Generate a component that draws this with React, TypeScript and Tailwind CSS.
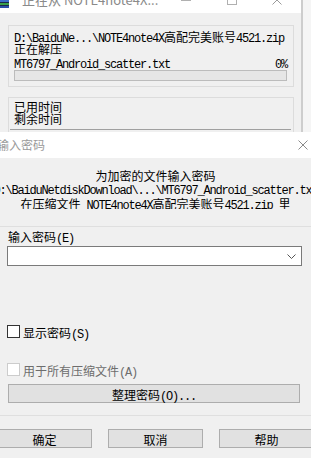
import React from "react";

const CJK_SPLIT = /([\u2E80-\u9FFF\uFF00-\uFFEF]+)/;
const CJK_TEST = /[\u2E80-\u9FFF\uFF00-\uFFEF]/;

// Chinese in a CJK face at 12px, latin runs as 6px-wide monospace like the system font
function Mixed({ text }: { text: string }) {
  return (
    <>
      {text.split(CJK_SPLIT).map((part, i) =>
        part === "" ? null : CJK_TEST.test(part) ? (
          <span key={i} className="font-['Noto_Sans_CJK_SC',sans-serif] text-[12px]">
            {part}
          </span>
        ) : (
          <span key={i} className="font-['Liberation_Mono',monospace] text-[12px] tracking-[-1.2px]">
            {part}
          </span>
        )
      )}
    </>
  );
}

function Line({ text, className = "" }: { text: string; className?: string }) {
  return (
    <div className={`h-[12px] leading-[12px] whitespace-nowrap ${className}`}>
      <Mixed text={text} />
    </div>
  );
}

function BooksIcon() {
  return (
    <svg width="9" height="16" viewBox="0 0 9 16" className="shrink-0">
      <rect x="0" y="8" width="9" height="2" fill="#3b6fc8" />
      <rect x="0" y="10" width="9" height="1" fill="#1b2a4a" />
      <rect x="0" y="11" width="9" height="2" fill="#3aa04a" />
      <rect x="0" y="13" width="9" height="1" fill="#1b2a4a" />
      <rect x="0" y="14" width="9" height="2" fill="#2a4fa8" />
    </svg>
  );
}

function CloseGlyph({ color }: { color: string }) {
  return (
    <svg width="10" height="10" viewBox="0 0 10 10" className="shrink-0">
      <path d="M0.5 0.5 L9.5 9.5 M9.5 0.5 L0.5 9.5" stroke={color} strokeWidth="1" fill="none" />
    </svg>
  );
}

function Button({ label, className = "" }: { label: string; className?: string }) {
  return (
    <div
      className={`h-[19px] bg-[#e1e1e1] border border-[#adadad] flex items-center justify-center text-black ${className}`}
    >
      <Line text={label} />
    </div>
  );
}

export default function App() {
  return (
    <div className="w-[311px] h-[458px] overflow-hidden bg-[#f5f5f5] text-black">
      {/* extraction progress window behind */}
      <div className="w-[303px] h-[132px] bg-[#f0f0f0] border-r-2 border-[#cdcdcd] overflow-hidden">
        <div className="h-[13px] bg-white overflow-hidden">
          <div className="h-[30px] -mt-[15px] flex items-center">
            <BooksIcon />
            <span className="ml-[13px] text-[13px] leading-[16px] text-[#8a8a8a] font-['Noto_Sans_CJK_SC',sans-serif] whitespace-nowrap">
              正在从 NOTE4note4X...
            </span>
            <div className="ml-auto flex items-center">
              <div className="w-[10px] h-[2px] bg-[#b0b0b0]" />
              <div className="ml-[36px] w-[10px] h-[10px] border border-[#b0b0b0]" />
              <div className="ml-[35px] mr-[19px]">
                <CloseGlyph color="#9a9a9a" />
              </div>
            </div>
          </div>
        </div>

        <div className="ml-[8px] mt-[12px] w-[286px] h-[62px] border border-[#dcdcdc] pl-[5px] pt-[4px]">
          <Line text="D:\BaiduNe...\NOTE4note4X高配完美账号4521.zip" />
          <Line text="正在解压" />
          <div className="mt-[2px] pr-[6px] flex justify-between">
            <Line text="MT6797_Android_scatter.txt" />
            <Line text="0%" />
          </div>
          <div className="mt-[2px] w-[273px] h-[11px] bg-[#e6e6e6] border border-[#bcbcbc]" />
        </div>

        <div className="ml-[8px] mt-[10px] w-[286px] h-[40px] border border-[#dcdcdc] pl-[5px] pt-[2px]">
          <Line text="已用时间" />
          <Line text="剩余时间" />
          <div className="mt-[5px] -ml-[4px] w-[281px] h-px bg-[#a0a0a0]" />
        </div>
      </div>

      {/* password dialog */}
      <div className="h-[326px] bg-[#f0f0f0]">
        <div className="h-[26px] bg-white flex items-center">
          <span className="-ml-[3px] text-[12px] leading-[16px] text-[#9a9a9a] font-['Noto_Sans_CJK_SC',sans-serif]">
            输入密码
          </span>
          <div className="ml-auto mr-[3px]">
            <CloseGlyph color="#8a8a8a" />
          </div>
        </div>

        <div className="pt-[11px] flex flex-col items-center overflow-hidden">
          <Line text="为加密的文件输入密码" />
          <Line className="mt-[1px]" text="D:\BaiduNetdiskDownload\...\MT6797_Android_scatter.txt" />
          <Line className="mt-[3px]" text="在压缩文件 NOTE4note4X高配完美账号4521.zip 里" />
        </div>

        <div className="mt-[17px] h-px bg-[#dfdfdf]" />

        <Line className="mt-[3px] ml-[8px]" text="输入密码(E)" />
        <div className="mt-[4px] ml-[7px] w-[295px] h-[20px] border border-[#7a7a7a] bg-white flex items-center justify-end pr-[5px]">
          <svg width="9" height="5" viewBox="0 0 9 5">
            <path d="M0.5 0.5 L4.5 4.5 L8.5 0.5" stroke="#555" strokeWidth="1" fill="none" />
          </svg>
        </div>

        <div className="mt-[59px] ml-[7px] h-[13px] flex items-center">
          <div className="w-[13px] h-[13px] border border-[#333333] bg-white" />
          <Line className="ml-[3px]" text="显示密码(S)" />
        </div>

        <div className="mt-[25px] ml-[7px] h-[13px] flex items-center text-[#6d6d6d]">
          <div className="w-[13px] h-[13px] border border-[#cccccc] bg-white" />
          <Line className="ml-[3px]" text="用于所有压缩文件(A)" />
        </div>

        <Button className="mt-[8px] ml-[8px] w-[292px]" label="整理密码(O)..." />

        <div className="mt-[12px] h-px bg-[#dfdfdf]" />

        <div className="mt-[13px] -ml-[3px] flex gap-[16px]">
          <Button className="w-[95px] shrink-0" label="确定" />
          <Button className="w-[95px] shrink-0" label="取消" />
          <Button className="w-[95px] shrink-0" label="帮助" />
        </div>
      </div>
    </div>
  );
}
